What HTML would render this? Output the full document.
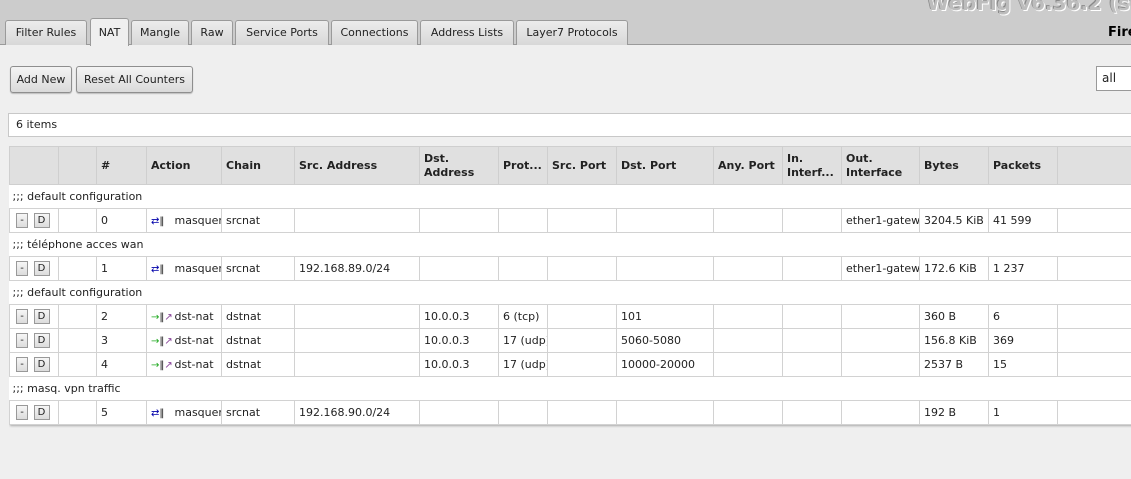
<!DOCTYPE html>
<html><head><meta charset="utf-8"><style>
*{box-sizing:border-box;margin:0;padding:0}
html,body{overflow:hidden}
body{width:1131px;height:479px;overflow:hidden;background:#efefef;font-family:"DejaVu Sans","Liberation Sans",sans-serif;font-size:11px;color:#222;position:relative}
.top{position:absolute;left:0;top:0;width:1131px;height:45px;background:#cccccc;border-bottom:1px solid #9a9a9a}
.title{position:absolute;left:927px;top:-9px;font-size:20px;font-weight:bold;color:#bdbdbd;text-shadow:1px 1px 0 #fff,-1px -1px 0 #8a8a8a;white-space:nowrap}
.fire{position:absolute;left:1108px;top:25px;font-size:13px;font-weight:bold;color:#000}
.tab{position:absolute;top:20px;height:25px;border:1px solid #9a9a9a;border-bottom:none;border-radius:3px 3px 0 0;background:linear-gradient(#ececec,#d8d8d8);text-align:center;line-height:24px;font-size:11px;color:#222}
.tab.act{top:18px;height:28px;background:#efefef;line-height:28px}
.btn{position:absolute;top:66px;height:27px;border:1px solid #8e8e8e;border-radius:3px;background:linear-gradient(#f4f4f4,#dadada);line-height:25px;text-align:center;font-size:11px;box-shadow:0 1px 1px #bbb}
.sel{position:absolute;left:1096px;top:66px;width:35px;height:25px;border:1px solid #999;border-right:none;background:#fff;padding-left:5px;line-height:23px;font-size:12px}
.items{position:absolute;left:8px;top:113px;width:1123px;height:24px;border:1px solid #c8c8c8;border-right:none;background:#fff;padding-left:7px;line-height:22px}
.wrap{position:absolute;left:9px;top:146px;width:1122px;overflow:hidden;padding-bottom:3px}
table{border-collapse:collapse;table-layout:fixed;width:1128px;background:#fff;box-shadow:1px 1px 2px #aaa}
th{background:#e0e0e0;height:38px;border:1px solid #cfcfcf;text-align:left;font-weight:bold;font-size:11px;padding-left:4px;line-height:14px;vertical-align:middle;overflow:hidden;white-space:nowrap}
td{height:24px;border:1px solid #d2d2d2;padding-left:4px;white-space:nowrap;overflow:hidden;font-size:11px}
td.c{border-left:none;border-right:none;padding-left:3px}
.b{display:inline-block;height:15px;border:1px solid #999;background:linear-gradient(#f6f6f6,#dcdcdc);font-size:10px;line-height:13px;text-align:center;vertical-align:middle;margin-left:2px}
.ic{display:inline-block;width:20px;font-size:10px;vertical-align:middle}
</style></head><body>
<div class="top"></div>
<div class="title">WebFig v6.36.2 (stable)</div>
<div class="fire">Fire</div>
<div class="tab" style="left:5px;width:82px">Filter Rules</div>
<div class="tab act" style="left:90px;width:39px">NAT</div>
<div class="tab" style="left:131px;width:58px">Mangle</div>
<div class="tab" style="left:191px;width:42px">Raw</div>
<div class="tab" style="left:235px;width:94px">Service Ports</div>
<div class="tab" style="left:331px;width:87px">Connections</div>
<div class="tab" style="left:420px;width:94px">Address Lists</div>
<div class="tab" style="left:516px;width:112px">Layer7 Protocols</div>
<div class="btn" style="left:10px;width:62px">Add New</div>
<div class="btn" style="left:76px;width:117px">Reset All Counters</div>
<div class="sel">all</div>
<div class="items">6 items</div>
<div class="wrap">
<table>
<colgroup><col style="width:49px"><col style="width:38px"><col style="width:50px"><col style="width:75px"><col style="width:73px"><col style="width:125px"><col style="width:79px"><col style="width:49px"><col style="width:69px"><col style="width:97px"><col style="width:69px"><col style="width:59px"><col style="width:78px"><col style="width:69px"><col style="width:69px"><col style="width:80px"></colgroup>
<tr><th></th><th></th><th>#</th><th>Action</th><th>Chain</th><th>Src. Address</th><th>Dst.<br>Address</th><th>Prot...</th><th>Src. Port</th><th>Dst. Port</th><th>Any. Port</th><th>In.<br>Interf...</th><th>Out.<br>Interface</th><th>Bytes</th><th>Packets</th><th></th></tr>
<tr><td class="c" colspan="16">;;; default configuration</td></tr>
<tr><td><span class="b" style="width:12px">-</span> <span class="b" style="width:16px">D</span></td><td></td><td>0</td><td><span class="ic"><span style="color:#00a">⇄</span>‖</span> masquerade</td><td>srcnat</td><td></td><td></td><td></td><td></td><td></td><td></td><td></td><td>ether1-gateway</td><td>3204.5 KiB</td><td>41 599</td><td></td></tr>
<tr><td class="c" colspan="16">;;; téléphone acces wan</td></tr>
<tr><td><span class="b" style="width:12px">-</span> <span class="b" style="width:16px">D</span></td><td></td><td>1</td><td><span class="ic"><span style="color:#00a">⇄</span>‖</span> masquerade</td><td>srcnat</td><td>192.168.89.0/24</td><td></td><td></td><td></td><td></td><td></td><td></td><td>ether1-gateway</td><td>172.6 KiB</td><td>1 237</td><td></td></tr>
<tr><td class="c" colspan="16">;;; default configuration</td></tr>
<tr><td><span class="b" style="width:12px">-</span> <span class="b" style="width:16px">D</span></td><td></td><td>2</td><td><span class="ic"><span style="color:#2a2">→</span>‖<span style="color:#849">↗</span></span> dst-nat</td><td>dstnat</td><td></td><td>10.0.0.3</td><td>6 (tcp)</td><td></td><td>101</td><td></td><td></td><td></td><td>360 B</td><td>6</td><td></td></tr>
<tr><td><span class="b" style="width:12px">-</span> <span class="b" style="width:16px">D</span></td><td></td><td>3</td><td><span class="ic"><span style="color:#2a2">→</span>‖<span style="color:#849">↗</span></span> dst-nat</td><td>dstnat</td><td></td><td>10.0.0.3</td><td>17 (udp)</td><td></td><td>5060-5080</td><td></td><td></td><td></td><td>156.8 KiB</td><td>369</td><td></td></tr>
<tr><td><span class="b" style="width:12px">-</span> <span class="b" style="width:16px">D</span></td><td></td><td>4</td><td><span class="ic"><span style="color:#2a2">→</span>‖<span style="color:#849">↗</span></span> dst-nat</td><td>dstnat</td><td></td><td>10.0.0.3</td><td>17 (udp)</td><td></td><td>10000-20000</td><td></td><td></td><td></td><td>2537 B</td><td>15</td><td></td></tr>
<tr><td class="c" colspan="16">;;; masq. vpn traffic</td></tr>
<tr><td><span class="b" style="width:12px">-</span> <span class="b" style="width:16px">D</span></td><td></td><td>5</td><td><span class="ic"><span style="color:#00a">⇄</span>‖</span> masquerade</td><td>srcnat</td><td>192.168.90.0/24</td><td></td><td></td><td></td><td></td><td></td><td></td><td></td><td>192 B</td><td>1</td><td></td></tr>
</table>
</div>
</body></html>
